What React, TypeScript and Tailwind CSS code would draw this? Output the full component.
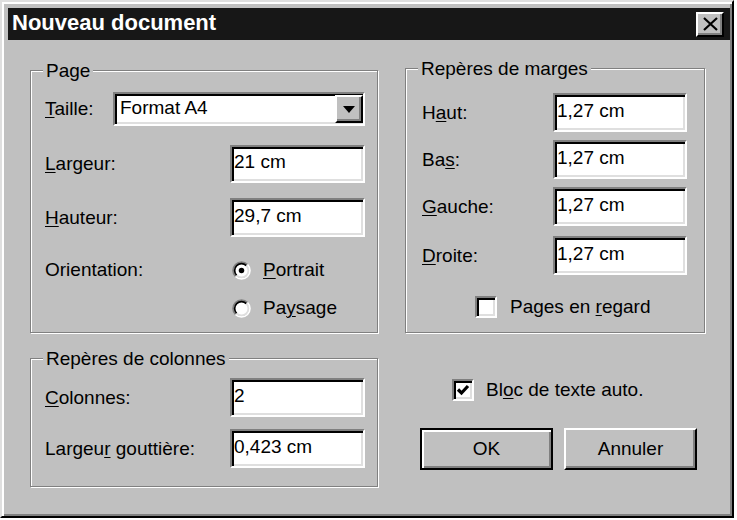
import React from "react";

const sunken =
  "border-2 border-t-[#808080] border-l-[#808080] border-b-white border-r-white shadow-[inset_2px_2px_0_#000,inset_-2px_-2px_0_#dfdfdf]";
const raised =
  "border-2 border-t-white border-l-white border-b-black border-r-black shadow-[inset_-2px_-2px_0_#808080]";

function Mn({ children }: { children: React.ReactNode }) {
  return <span className="underline decoration-1 underline-offset-[2px]">{children}</span>;
}

function Field({ value, w = "w-[135px]" }: { value: string; w?: string }) {
  return (
    <div className={`${w} h-full flex items-center bg-white pl-[2px] pb-[4px] ${sunken}`}>
      {value}
    </div>
  );
}

function Group({
  title,
  className = "",
  children,
}: {
  title: string;
  className?: string;
  children: React.ReactNode;
}) {
  return (
    <div
      className={`relative border border-[#808080] shadow-[inset_1px_1px_0_#fff,1px_1px_0_#fff] ${className}`}
    >
      <span className="absolute -top-[11px] left-[12px] bg-[#c0c0c0] px-[3px] leading-[22px]">
        {title}
      </span>
      {children}
    </div>
  );
}

function Radio({ checked }: { checked?: boolean }) {
  return (
    <svg width="19" height="19" viewBox="0 0 18 18" className="shrink-0">
      <circle cx="9" cy="9" r="7" fill="#fff" />
      <path d="M3.34 14.66A8 8 0 0 1 14.66 3.34" fill="none" stroke="#808080" strokeWidth="1.6" />
      <path d="M14.66 3.34A8 8 0 0 1 3.34 14.66" fill="none" stroke="#fff" strokeWidth="1.6" />
      <path d="M4.4 13.6A6.5 6.5 0 0 1 13.6 4.4" fill="none" stroke="#000" strokeWidth="1.6" />
      <path d="M13.6 4.4A6.5 6.5 0 0 1 4.4 13.6" fill="none" stroke="#dfdfdf" strokeWidth="1.6" />
      {checked && <circle cx="9" cy="9" r="2.6" fill="#000" />}
    </svg>
  );
}

function Check({ checked }: { checked?: boolean }) {
  return (
    <div className={`w-[22px] h-[22px] shrink-0 bg-white flex items-center justify-center ${sunken}`}>
      {checked && (
        <svg width="14" height="14" viewBox="0 0 14 14">
          <path d="M2 6.5l3.5 3.5L12 3" fill="none" stroke="#000" strokeWidth="3.2" />
        </svg>
      )}
    </div>
  );
}

function Row({
  label,
  value,
  className = "",
  w,
}: {
  label: React.ReactNode;
  value: string;
  className?: string;
  w?: string;
}) {
  return (
    <div className={`h-[39px] flex items-center justify-between ${className}`}>
      <span>{label}</span>
      <Field value={value} w={w} />
    </div>
  );
}

export default function App() {
  return (
    <div className="w-[737px] h-[520px] bg-white font-['Liberation_Sans',Arial,sans-serif] text-[19px] leading-[22px] text-black">
      <div className="w-[734px] h-[518px] bg-[#c0c0c0] flex flex-col border-2 border-t-[#dfdfdf] border-l-[#dfdfdf] border-r-black border-b-black shadow-[inset_2px_2px_0_#fff,inset_-2px_-2px_0_#808080] pt-[6px] pl-[6px] pr-[2px]">
        {/* title bar */}
        <div className="h-[32px] bg-[#171717] flex items-center justify-between pl-[4px] pr-[6px]">
          <span className="text-white font-bold text-[22px] leading-none pb-[2px]">
            Nouveau document
          </span>
          <div className={`w-[28px] h-[25px] bg-[#c0c0c0] flex items-center justify-center ${raised}`}>
            <svg width="17" height="14" viewBox="0 0 17 14">
              <path d="M2 1l13 12M15 1L2 13" stroke="#000" strokeWidth="2.2" />
            </svg>
          </div>
        </div>

        <div className="flex">
          {/* left column */}
          <div className="ml-[22px] pt-[30px] w-[348px] flex flex-col">
            <Group title="Page" className="pl-[14px] pr-[12px] pt-[21px] pb-[12px]">
              <div className="h-[34px] flex items-center">
                <span className="w-[68px]">
                  <Mn>T</Mn>aille:
                </span>
                <div className={`w-[252px] h-[34px] bg-white flex items-center justify-between pl-[5px] ${sunken}`}>
                  <span className="pb-[2px]">Format A4</span>
                  <div className={`w-[28px] h-[28px] bg-[#c0c0c0] flex items-center justify-center ${raised}`}>
                    <svg width="12" height="7" viewBox="0 0 12 7">
                      <path d="M0 0h12L6 7z" fill="#000" />
                    </svg>
                  </div>
                </div>
              </div>
              <div className="mt-[19px] h-[38px] flex items-center justify-between">
                <span>
                  <Mn>L</Mn>argeur:
                </span>
                <Field value="21 cm" />
              </div>
              <Row
                className="mt-[15px]"
                label={
                  <>
                    <Mn>H</Mn>auteur:
                  </>
                }
                value="29,7 cm"
              />
              <div className="mt-[21px] h-[24px] flex items-center">
                <span className="w-[187px]">Orientation:</span>
                <Radio checked />
                <span className="ml-[12px]">
                  <Mn>P</Mn>ortrait
                </span>
              </div>
              <div className="mt-[14px] h-[24px] flex items-center pl-[187px]">
                <Radio />
                <span className="ml-[12px]">
                  Pa<Mn>y</Mn>sage
                </span>
              </div>
            </Group>

            <Group title="Repères de colonnes" className="mt-[25px] pl-[14px] pr-[12px] pt-[19px] pb-[18px]">
              <Row
                label={
                  <>
                    <Mn>C</Mn>olonnes:
                  </>
                }
                value="2"
              />
              <Row
                className="mt-[12px]"
                label={
                  <>
                    Largeu<Mn>r</Mn> gouttière:
                  </>
                }
                value="0,423 cm"
              />
            </Group>
          </div>

          {/* right column */}
          <div className="ml-[27px] pt-[28px] w-[300px] flex flex-col">
            <Group title="Repères de marges" className="pl-[16px] pr-[17px] pt-[24px] pb-[14px]">
              <Row
                w="w-[134px]"
                label={
                  <>
                    H<Mn>a</Mn>ut:
                  </>
                }
                value="1,27 cm"
              />
              <Row
                w="w-[134px]"
                className="mt-[8px]"
                label={
                  <>
                    Ba<Mn>s</Mn>:
                  </>
                }
                value="1,27 cm"
              />
              <Row
                w="w-[134px]"
                className="mt-[8px]"
                label={
                  <>
                    <Mn>G</Mn>auche:
                  </>
                }
                value="1,27 cm"
              />
              <Row
                w="w-[134px]"
                className="mt-[10px]"
                label={
                  <>
                    <Mn>D</Mn>roite:
                  </>
                }
                value="1,27 cm"
              />
              <div className="mt-[21px] h-[22px] flex items-center ml-[53px]">
                <Check />
                <span className="ml-[13px]">
                  Pages en <Mn>r</Mn>egard
                </span>
              </div>
            </Group>

            <div className="mt-[46px] h-[22px] flex items-center ml-[47px]">
              <Check checked />
              <span className="ml-[12px]">
                Bl<Mn>o</Mn>c de texte auto.
              </span>
            </div>

            <div className="mt-[27px] ml-[15px] flex gap-[11px]">
              <button className="w-[133px] h-[42px] border-2 border-black shadow-[inset_2px_2px_0_#fff,inset_-2px_-2px_0_#808080] bg-[#c0c0c0] flex items-center justify-center">
                OK
              </button>
              <button className={`w-[133px] h-[42px] bg-[#c0c0c0] flex items-center justify-center ${raised}`}>
                Annuler
              </button>
            </div>
          </div>
        </div>
      </div>
    </div>
  );
}
